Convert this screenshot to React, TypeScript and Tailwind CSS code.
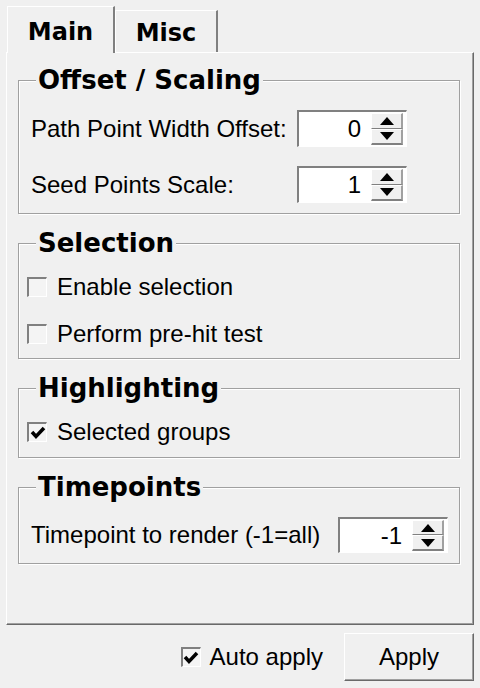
import React from "react";

const body = "font-['Liberation_Sans',Arial,sans-serif]";
const bold = "font-['DejaVu_Sans',Verdana,sans-serif] font-bold";

function Triangle({ up }: { up?: boolean }) {
  return (
    <svg width="14" height="8" viewBox="0 0 14 8">
      <polygon points={up ? "7,0 14,8 0,8" : "0,0 14,0 7,8"} fill="#000" />
    </svg>
  );
}

function SpinBox({ value, h = "h-[37px]" }: { value: string; h?: string }) {
  return (
    <div
      className={`flex w-[110px] ${h} border-t-2 border-l-2 border-t-[#808080] border-l-[#808080] border-r border-b border-r-white border-b-white bg-white`}
    >
      <div className="flex flex-1 items-center justify-end pr-[10px] text-[24px] leading-none">
        {value}
      </div>
      <div className="my-[1px] mr-[3px] flex w-[32px] flex-col">
        <div className="flex flex-1 items-center justify-center border-t border-l border-white border-r-2 border-b border-r-[#a0a0a0] border-b-[#808080] bg-[#f0f0f0]">
          <Triangle up />
        </div>
        <div className="flex flex-1 items-center justify-center border-t border-l border-white border-r-2 border-b-2 border-r-[#a0a0a0] border-b-[#808080] bg-[#f0f0f0]">
          <Triangle />
        </div>
      </div>
    </div>
  );
}

function CheckBox({ checked }: { checked?: boolean }) {
  return (
    <div className="flex h-[20px] w-[20px] items-center justify-center border-t-2 border-l-2 border-t-[#808080] border-l-[#808080] border-r border-b border-r-white border-b-white bg-[#f4f4f4]">
      {checked && (
        <svg width="16" height="14" viewBox="0 0 16 14">
          <polyline
            points="2,6 6,10.5 14,2"
            fill="none"
            stroke="#000"
            strokeWidth="3.5"
          />
        </svg>
      )}
    </div>
  );
}

function Group({
  title,
  className,
  children,
}: {
  title: string;
  className?: string;
  children: React.ReactNode;
}) {
  return (
    <fieldset
      className={`border border-[#a0a0a0] shadow-[1px_1px_0_#fff,inset_1px_1px_0_#fff] ${className ?? ""}`}
    >
      <legend
        className={`ml-[17px] bg-[#f0f0f0] px-[2px] text-[26px] leading-[30px] text-black ${bold}`}
      >
        {title}
      </legend>
      {children}
    </fieldset>
  );
}

function CheckRow({ label, checked }: { label: string; checked?: boolean }) {
  return (
    <div className="flex h-[30px] items-center gap-[10px]">
      <CheckBox checked={checked} />
      <span className="text-[24px] leading-none">{label}</span>
    </div>
  );
}

export default function App() {
  return (
    <div className={`h-[688px] w-[480px] overflow-hidden bg-[#f0f0f0] text-black ${body}`}>
      <div className="flex h-[52px] items-end pl-[7px] pt-[6px]">
        <div
          className={`relative z-10 -mb-px flex h-[47px] w-[108px] items-center justify-center border-t border-l border-white border-r-2 border-r-[#808080] bg-[#f0f0f0] pt-[4px] text-[24px] ${bold}`}
        >
          Main
        </div>
        <div
          className={`flex h-[42px] w-[103px] items-center justify-center border-t border-l border-white border-r-2 border-r-[#808080] pt-[2px] text-[24px] ${bold}`}
        >
          Misc
        </div>
      </div>

      <div className="ml-[6px] flex h-[573px] w-[468px] flex-col border-t border-l border-white border-r border-b border-r-[#696969] border-b-[#696969] pl-[11px] pr-[13px] pt-[12px] shadow-[inset_-1px_-1px_0_#a0a0a0]">
        <Group title="Offset / Scaling">
          <div className="flex flex-col gap-[19px] pt-[15px] pb-[10px] pl-[12px]">
            <div className="flex items-center">
              <span className="w-[266px] text-[24px] leading-none">Path Point Width Offset:</span>
              <SpinBox value="0" />
            </div>
            <div className="flex items-center">
              <span className="w-[266px] text-[24px] leading-none">Seed Points Scale:</span>
              <SpinBox value="1" />
            </div>
          </div>
        </Group>

        <Group title="Selection" className="mt-[14px]">
          <div className="flex flex-col gap-[17px] pt-[14px] pb-[9px] pl-[8px]">
            <CheckRow label="Enable selection" />
            <CheckRow label="Perform pre-hit test" />
          </div>
        </Group>

        <Group title="Highlighting" className="mt-[14px]">
          <div className="flex flex-col pt-[14px] pb-[10px] pl-[8px]">
            <CheckRow label="Selected groups" checked />
          </div>
        </Group>

        <Group title="Timepoints" className="mt-[14px]">
          <div className="flex items-center pt-[15px] pb-[10px] pl-[12px]">
            <span className="w-[307px] text-[24px] leading-none">Timepoint to render (-1=all)</span>
            <SpinBox value="-1" h="h-[36px]" />
          </div>
        </Group>
      </div>

      <div className="mt-[8px] flex items-center justify-end pr-[6px]">
        <div className="flex items-center gap-[9px]">
          <CheckBox checked />
          <span className="text-[24px] leading-none">Auto apply</span>
        </div>
        <button className="ml-[21px] flex h-[48px] w-[130px] items-center justify-center border-t border-l border-white border-r border-b border-r-[#696969] border-b-[#696969] bg-[#f0f0f0] text-[24px] shadow-[inset_-1px_-1px_0_#a0a0a0]">
          Apply
        </button>
      </div>
    </div>
  );
}
